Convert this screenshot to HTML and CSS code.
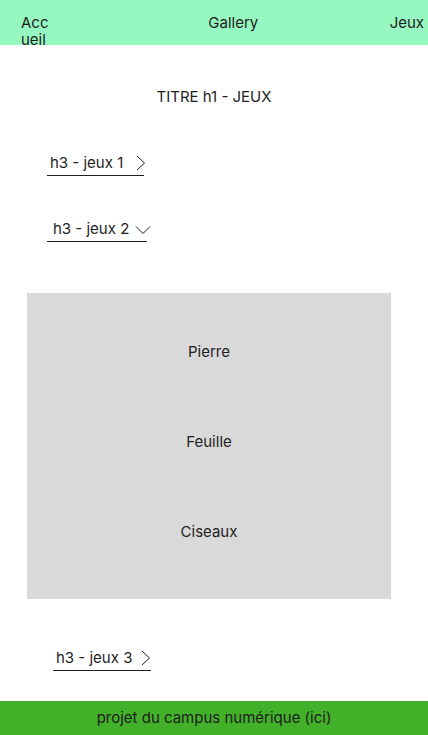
FILE: index.html
```html
<!DOCTYPE html>
<html lang="fr">
<head>
<meta charset="utf-8">
<title>Jeux</title>
<link rel="stylesheet" href="styles.css">
</head>
<body>
<header class="topbar">
  <nav class="nav">
    <a class="nav-item nav-first">Accueil</a>
    <a class="nav-item nav-mid">Gallery</a>
    <a class="nav-item nav-last">Jeux</a>
  </nav>
</header>
<main class="content">
  <h1 class="title">TITRE h1 - JEUX</h1>
  <h3 class="game game-1">h3 - jeux 1
    <svg class="chev-r" width="10" height="16" viewBox="0 0 10 16"><polyline points="1,1 8.5,8 1,15" fill="none" stroke="#1e1e1e" stroke-width="1"/></svg>
  </h3>
  <h3 class="game game-2">h3 - jeux 2
    <svg class="chev-d" width="16" height="10" viewBox="0 0 16 10"><polyline points="1,1.5 8,8.5 15,1.5" fill="none" stroke="#1e1e1e" stroke-width="1"/></svg>
  </h3>
  <section class="panel">
    <p class="choice">Pierre</p>
    <p class="choice">Feuille</p>
    <p class="choice">Ciseaux</p>
  </section>
  <h3 class="game game-3">h3 - jeux 3
    <svg class="chev-r" width="10" height="16" viewBox="0 0 10 16"><polyline points="1,1 8.5,8 1,15" fill="none" stroke="#1e1e1e" stroke-width="1"/></svg>
  </h3>
</main>
<footer class="footer">projet du campus numérique (ici)</footer>
</body>
</html>
```
FILE: styles.css
```css
* { box-sizing: border-box; }
html, body { margin: 0; padding: 0; }
body {
  font-family: Inter, "Noto Sans", sans-serif;
  font-size: 15px;
  color: #1e1e1e;
  background: #fff;
  width: 428px;
  height: 735px;
  display: flex;
  flex-direction: column;
  overflow: hidden;
}
.topbar {
  height: 45px;
  background: #96f7c1;
  overflow: hidden;
  flex: none;
}
.nav {
  display: flex;
  justify-content: space-between;
  align-items: flex-start;
  padding: 14px 4px 0 21px;
  line-height: 17px;
}
.nav-item { color: #1e1e1e; }
.nav-first { width: 30px; word-break: break-all; }
.nav-mid { margin-left: 26px; }
.content {
  flex: 1;
  display: flex;
  flex-direction: column;
}
.title {
  margin: 43px 0 0;
  font-size: 15px;
  font-weight: 400;
  text-align: center;
  line-height: 18px;
}
.game {
  margin: 0;
  font-size: 15px;
  font-weight: 400;
  line-height: 18px;
  display: inline-flex;
  align-self: flex-start;
  align-items: center;
  border-bottom: 1px solid #1e1e1e;
  padding-bottom: 3px;
}
.game-1 { margin: 48px 0 0 47px; padding-left: 3px; gap: 13px; }
.game-1 .chev-r { margin-right: -2px; }
.game-2 { margin: 44px 0 0 47px; padding-left: 6px; gap: 6px; }
.game-2 .chev-d { margin-right: -4px; }
.game-3 { margin: 50px 0 0 53px; padding-left: 3px; gap: 9px; }
.chev-r { display: block; }
.chev-d { display: block; margin-top: 2px; }
.panel {
  margin: 51px 0 0 27px;
  width: 364px;
  height: 306px;
  background: #d9d9d9;
  display: flex;
  flex-direction: column;
  align-items: center;
  padding-top: 50px;
  gap: 72px;
}
.choice { margin: 0; line-height: 18px; }
.footer {
  height: 34px;
  flex: none;
  margin-top: auto;
  background: #43b02a;
  text-align: center;
  line-height: 34px;
  font-size: 15px;
  color: #1e1e1e;
}
```
